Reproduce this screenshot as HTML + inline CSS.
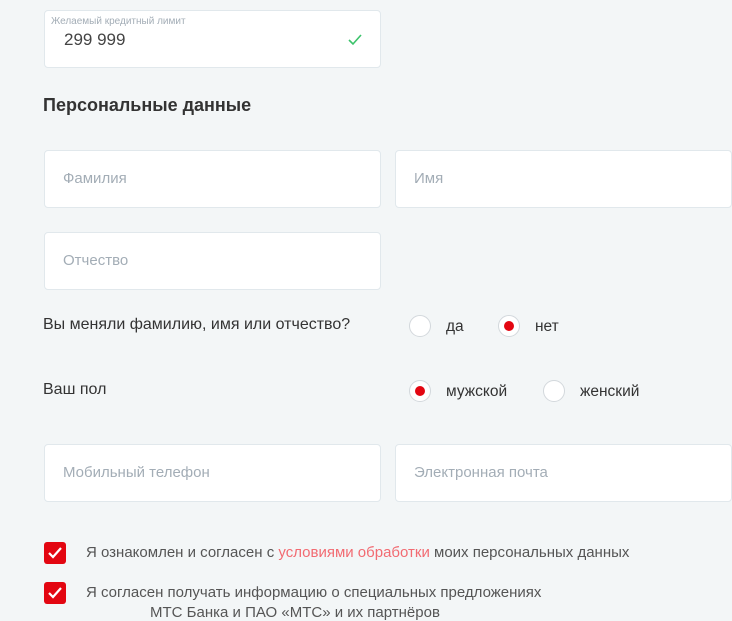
<!DOCTYPE html><html><head><meta charset="utf-8"><style>
body{margin:0;width:732px;height:612px;overflow:hidden;background:#f3f6f7;font-family:"Liberation Sans",sans-serif;position:relative;color:#333}
.in{position:absolute;background:#fff;border:1px solid #e1e8ec;border-radius:4px;box-sizing:border-box;height:58px}
.ph{position:absolute;left:18px;top:19px;font-size:15px;color:#a3adb6}
.t{position:absolute;font-size:15.5px;color:#333}
.r{position:absolute;width:22px;height:22px;border-radius:50%;background:#fff;border:1px solid #d3d8dc;box-sizing:border-box}
.r.on::after{content:"";position:absolute;left:5px;top:5px;width:10px;height:10px;border-radius:50%;background:#e30611}
.cb{position:absolute;left:44px;width:22px;height:22px;background:#e30611;border-radius:3px}
.ct{position:absolute;left:86px;font-size:15px;color:#555}
</style></head><body>
<div class="in" style="left:44px;top:10px;width:337px">
<div style="position:absolute;left:6px;top:5px;font-size:10px;color:#a3adb6">Желаемый кредитный лимит</div>
<div style="position:absolute;left:19px;top:19px;font-size:17px;color:#444">299 999</div>
<svg style="position:absolute;left:302px;top:22px" width="16" height="14" viewBox="0 0 16 14"><path d="M2 7l4 4 8-9" fill="none" stroke="#3cc36b" stroke-width="1.6"/></svg>
</div>
<div style="position:absolute;left:43px;top:95px;font-size:18px;font-weight:bold;color:#333">Персональные данные</div>
<div class="in" style="left:44px;top:150px;width:337px"><div class="ph">Фамилия</div></div>
<div class="in" style="left:395px;top:150px;width:337px"><div class="ph">Имя</div></div>
<div class="in" style="left:44px;top:232px;width:337px"><div class="ph">Отчество</div></div>
<div class="t" style="left:43px;top:316px;font-size:16px">Вы меняли фамилию, имя или отчество?</div>
<div class="r" style="left:409px;top:315px"></div><div class="t" style="left:446px;top:318px">да</div>
<div class="r on" style="left:498px;top:315px"></div><div class="t" style="left:535px;top:318px">нет</div>
<div class="t" style="left:43px;top:381px;font-size:16px">Ваш пол</div>
<div class="r on" style="left:409px;top:380px"></div><div class="t" style="left:446px;top:383px">мужской</div>
<div class="r" style="left:543px;top:380px"></div><div class="t" style="left:580px;top:383px">женский</div>
<div class="in" style="left:44px;top:444px;width:337px"><div class="ph">Мобильный телефон</div></div>
<div class="in" style="left:395px;top:444px;width:337px"><div class="ph">Электронная почта</div></div>
<div class="cb" style="top:542px"><svg width="22" height="22"><path d="M5 11l4 4 8-9" fill="none" stroke="#fff" stroke-width="2.2"/></svg></div>
<div class="ct" style="top:544px">Я ознакомлен и согласен с <span style="color:#f26b72">условиями обработки</span> моих персональных данных</div>
<div class="cb" style="top:582px"><svg width="22" height="22"><path d="M5 11l4 4 8-9" fill="none" stroke="#fff" stroke-width="2.2"/></svg></div>
<div class="ct" style="top:584px">Я согласен получать информацию о специальных предложениях</div>
<div class="ct" style="top:604px;left:150px">МТС Банка и ПАО «МТС» и их партнёров</div>
</body></html>
